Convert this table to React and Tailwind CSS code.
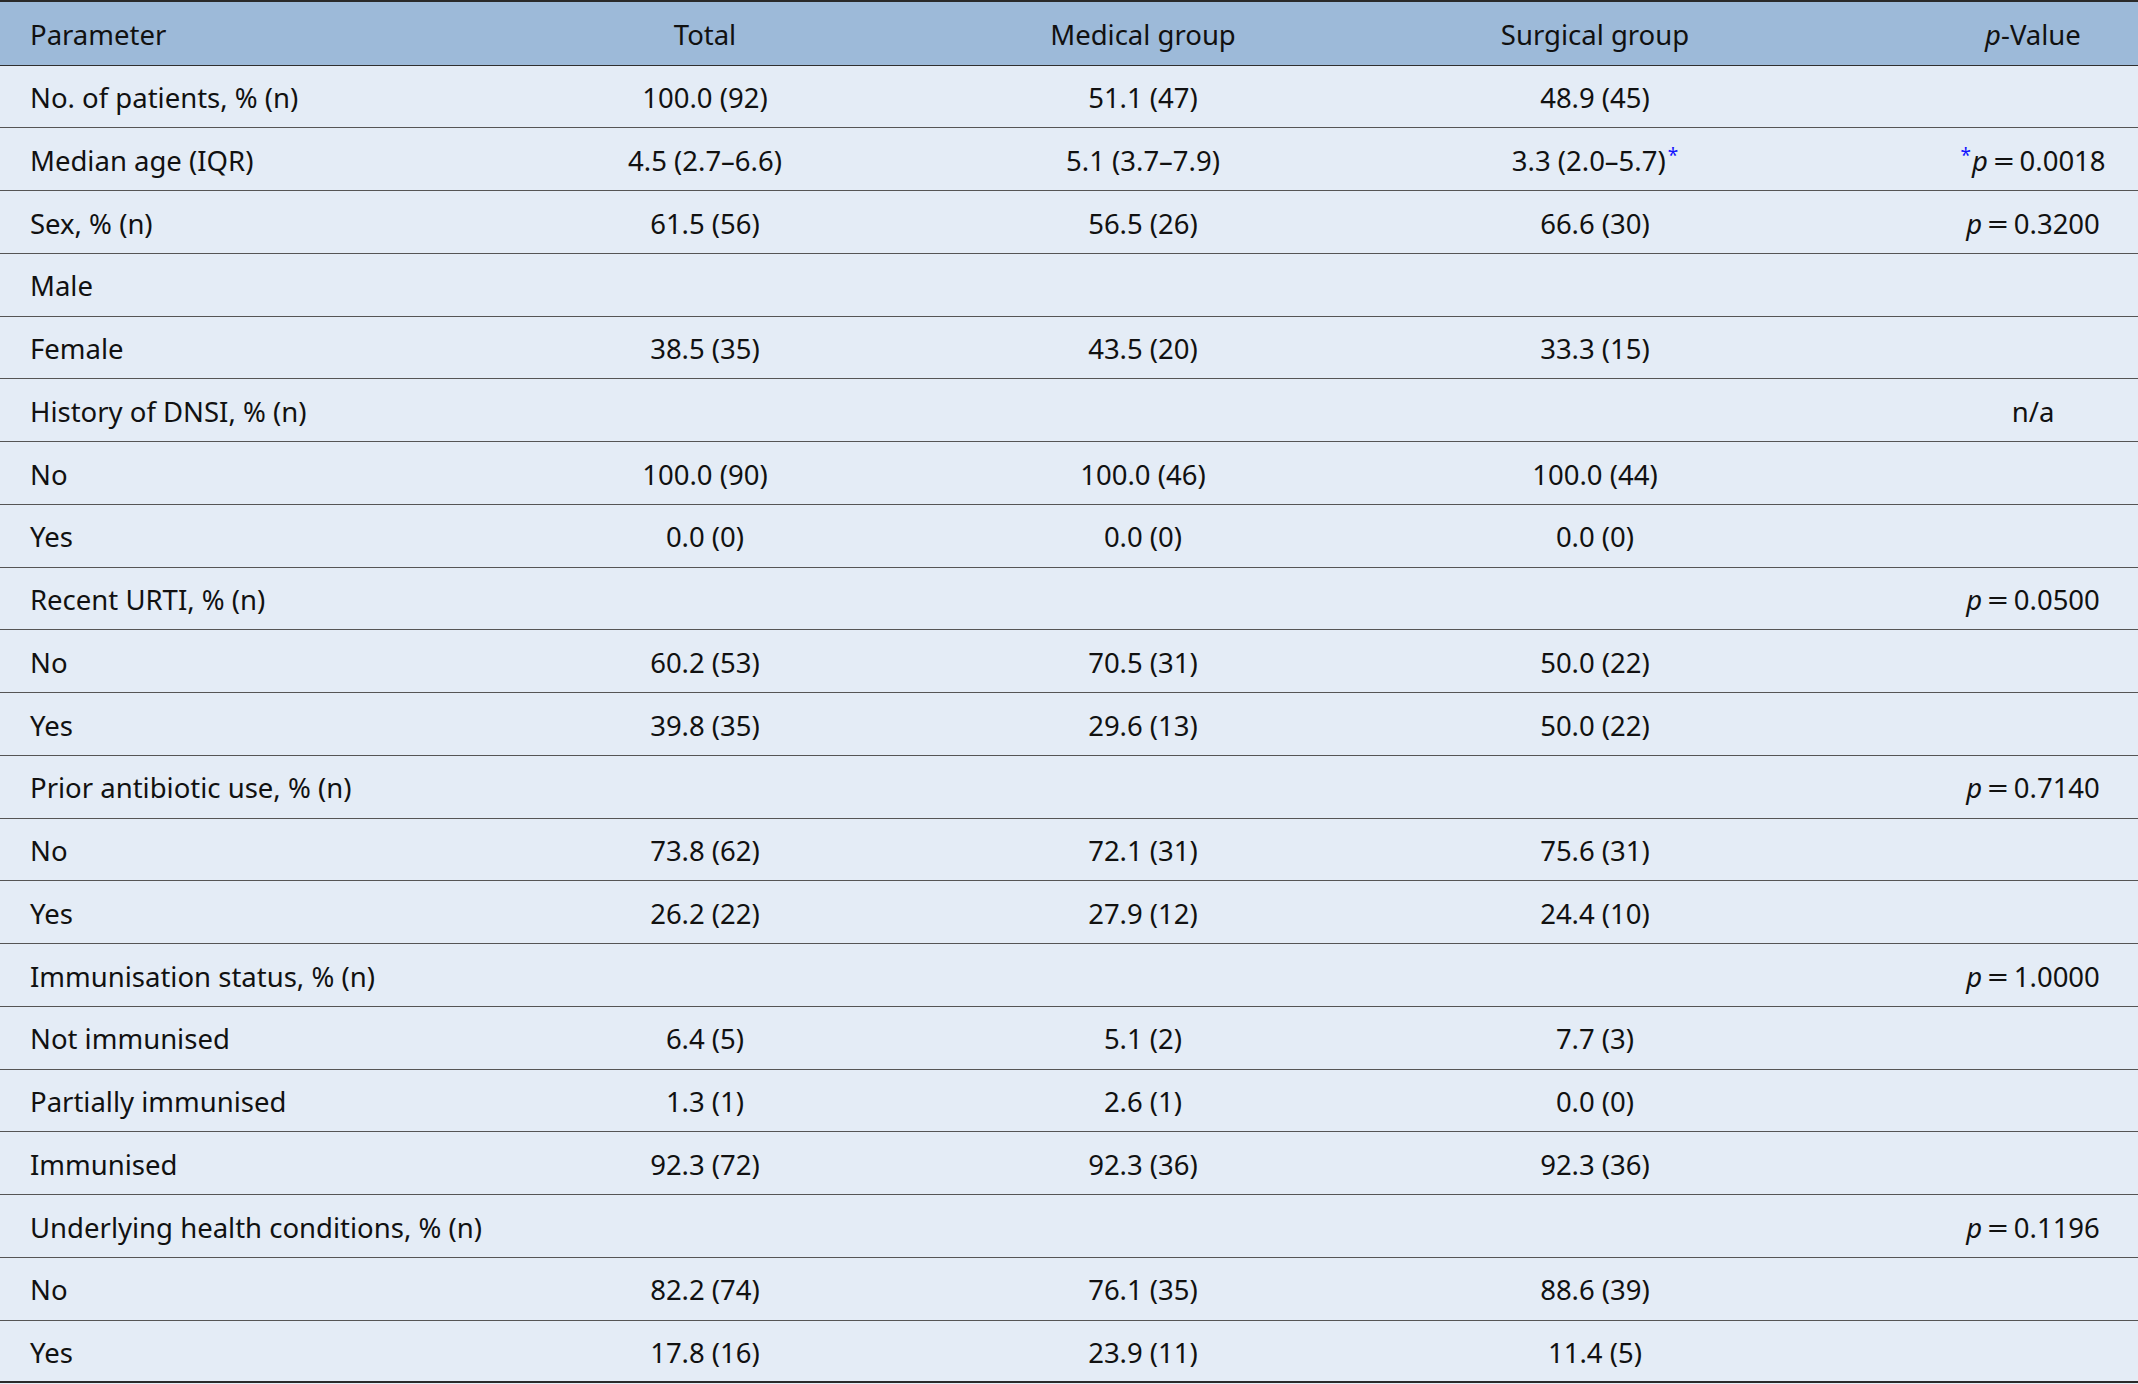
import React from "react";

const rows = [
  ["No. of patients, % (n)", "100.0 (92)", "51.1 (47)", "48.9 (45)", null],
  ["Median age (IQR)", "4.5 (2.7–6.6)", "5.1 (3.7–7.9)", "3.3 (2.0–5.7)*", "*0.0018"],
  ["Sex, % (n)", "61.5 (56)", "56.5 (26)", "66.6 (30)", "0.3200"],
  ["Male", "", "", "", null],
  ["Female", "38.5 (35)", "43.5 (20)", "33.3 (15)", null],
  ["History of DNSI, % (n)", "", "", "", "n/a"],
  ["No", "100.0 (90)", "100.0 (46)", "100.0 (44)", null],
  ["Yes", "0.0 (0)", "0.0 (0)", "0.0 (0)", null],
  ["Recent URTI, % (n)", "", "", "", "0.0500"],
  ["No", "60.2 (53)", "70.5 (31)", "50.0 (22)", null],
  ["Yes", "39.8 (35)", "29.6 (13)", "50.0 (22)", null],
  ["Prior antibiotic use, % (n)", "", "", "", "0.7140"],
  ["No", "73.8 (62)", "72.1 (31)", "75.6 (31)", null],
  ["Yes", "26.2 (22)", "27.9 (12)", "24.4 (10)", null],
  ["Immunisation status, % (n)", "", "", "", "1.0000"],
  ["Not immunised", "6.4 (5)", "5.1 (2)", "7.7 (3)", null],
  ["Partially immunised", "1.3 (1)", "2.6 (1)", "0.0 (0)", null],
  ["Immunised", "92.3 (72)", "92.3 (36)", "92.3 (36)", null],
  ["Underlying health conditions, % (n)", "", "", "", "0.1196"],
  ["No", "82.2 (74)", "76.1 (35)", "88.6 (39)", null],
  ["Yes", "17.8 (16)", "23.9 (11)", "11.4 (5)", null],
];

function Val({ v }) {
  if (v.endsWith("*")) {
    return (
      <span className="whitespace-nowrap">
        {v.slice(0, -1)}
        <span className="text-[#1414ff] text-[19px] relative top-[-9px] ml-[2px]">*</span>
      </span>
    );
  }
  return <span className="whitespace-nowrap">{v}</span>;
}

function PVal({ v }) {
  if (v === null) return null;
  if (v === "n/a") return <span>n/a</span>;
  const star = v.startsWith("*");
  const num = star ? v.slice(1) : v;
  return (
    <span className="whitespace-nowrap">
      {star && <span className="text-[#1414ff] text-[19px] relative top-[-9px] mr-[1px]">*</span>}
      <i>p</i>
      <span className="mx-[8px] inline-block scale-x-[1.35]">=</span>
      {num}
    </span>
  );
}

const grid = "grid grid-cols-[486px_438px_438px_466px_1fr] items-center";

export default function App() {
  return (
    <div
      className="w-[2138px] h-[1384px] bg-[#e4ecf6] text-[#111] text-[27.5px] leading-none overflow-hidden"
      style={{ fontFamily: '"Noto Sans", "Open Sans", sans-serif' }}
    >
      <div className="border-t-2 border-[#2a2a2a]">
        <div className={`${grid} h-[63.5px] pt-[3px] bg-[#9dbad9] border-b-[1.5px] border-[#2f2f2f]`}>
          <div className="pl-[30px]">Parameter</div>
          <div className="text-center">Total</div>
          <div className="text-center">Medical group</div>
          <div className="text-center">Surgical group</div>
          <div className="text-center pl-[100px]">
            <i>p</i>-Value
          </div>
        </div>
        {rows.map((r, i) => (
          <div
            key={i}
            className={`${grid} h-[62.75px] pt-[3px] ${
              i === rows.length - 1 ? "border-b-2 border-[#2a2a2a]" : "border-b-[1.5px] border-[#555]"
            }`}
          >
            <div className="pl-[30px] whitespace-nowrap">{r[0]}</div>
            <div className="text-center"><Val v={r[1]} /></div>
            <div className="text-center"><Val v={r[2]} /></div>
            <div className="text-center"><Val v={r[3]} /></div>
            <div className="text-center pl-[100px]"><PVal v={r[4]} /></div>
          </div>
        ))}
      </div>
    </div>
  );
}
